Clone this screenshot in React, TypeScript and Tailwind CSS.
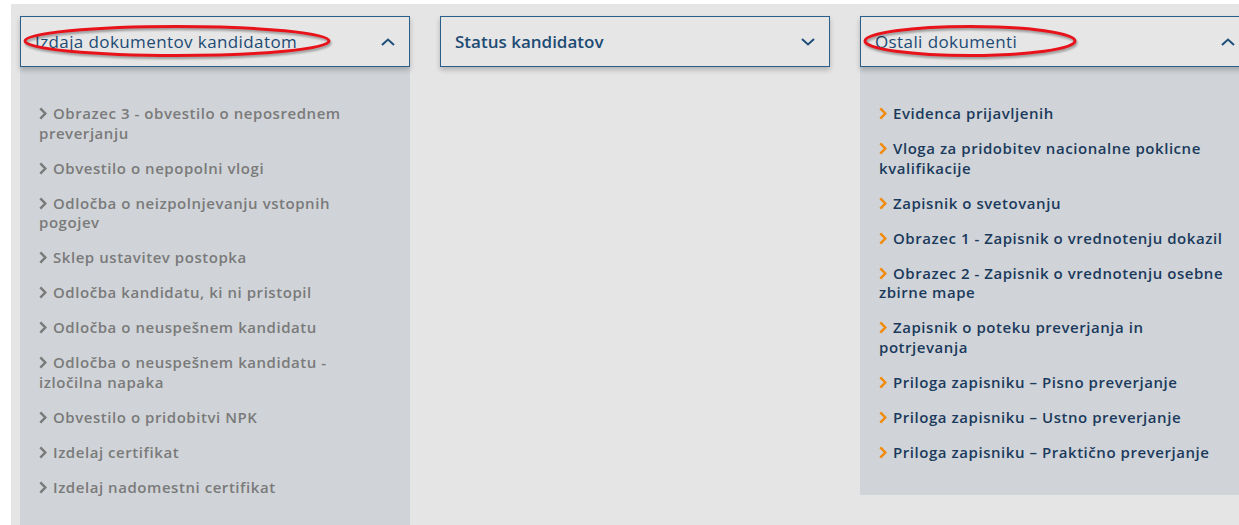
import React from 'react';

const izdaja = [
  'Obrazec 3 - obvestilo o neposrednem preverjanju',
  'Obvestilo o nepopolni vlogi',
  'Odločba o neizpolnjevanju vstopnih pogojev',
  'Sklep ustavitev postopka',
  'Odločba kandidatu, ki ni pristopil',
  'Odločba o neuspešnem kandidatu',
  'Odločba o neuspešnem kandidatu - izločilna napaka',
  'Obvestilo o pridobitvi NPK',
  'Izdelaj certifikat',
  'Izdelaj nadomestni certifikat',
];

const ostali = [
  'Evidenca prijavljenih',
  'Vloga za pridobitev nacionalne poklicne kvalifikacije',
  'Zapisnik o svetovanju',
  'Obrazec 1 - Zapisnik o vrednotenju dokazil',
  'Obrazec 2 - Zapisnik o vrednotenju osebne zbirne mape',
  'Zapisnik o poteku preverjanja in potrjevanja',
  'Priloga zapisniku – Pisno preverjanje',
  'Priloga zapisniku – Ustno preverjanje',
  'Priloga zapisniku – Praktično preverjanje',
];

function Caret({ up }: { up: boolean }) {
  return (
    <svg width="14" height="8" viewBox="0 0 14 8" className="shrink-0">
      <path
        d={up ? 'M1 7 L7 1.5 L13 7' : 'M1 1 L7 6.5 L13 1'}
        fill="none"
        stroke="#1f4e78"
        strokeWidth="2"
      />
    </svg>
  );
}

function Arrow({ color }: { color: string }) {
  return (
    <svg width="8" height="13" viewBox="0 0 8 13" className="inline-block align-[-1px] mr-[6px]">
      <path d="M1.3 1.3 L6.3 6.5 L1.3 11.7" fill="none" stroke={color} strokeWidth="2.5" />
    </svg>
  );
}

// red hand-drawn style ring around a header title
function Ring({ w }: { w: number }) {
  return (
    <svg
      width={w}
      height="36"
      viewBox={`0 0 ${w} 36`}
      className="absolute left-[1px] top-[7px] pointer-events-none drop-shadow-[1px_2px_1px_rgba(0,0,0,0.35)]"
    >
      <ellipse cx={w / 2} cy="17" rx={w / 2 - 3} ry="14.5" fill="none" stroke="#e8121a" strokeWidth="3" />
    </svg>
  );
}

function Panel({
  title,
  open,
  ring,
  items,
  active,
}: {
  title: string;
  open: boolean;
  ring?: number;
  items?: string[];
  active?: boolean;
}) {
  return (
    <div className="w-[390px] shrink-0 flex flex-col">
      <div className="relative z-10 h-[51px] bg-[#e6e6e6] border border-[#2b5e8a] shadow-[0_3px_5px_rgba(0,0,0,0.22)] flex items-center justify-between pl-[14px] pr-[14px]">
        <span
          className={`text-[17px] text-[#1d4b74] ${ring ? 'font-medium tracking-[0.4px]' : 'font-semibold'}`}
        >
          {title}
        </span>
        <Caret up={open} />
        {ring ? <Ring w={ring} /> : null}
      </div>
      {open && items ? (
        <ul className="bg-[#d0d4d8] pt-[37px] pb-[33px] pl-[19px] pr-[19px] flex flex-col gap-[15.5px]">
          {items.map((t) => (
            <li
              key={t}
              className={`text-[15px] leading-[19.5px] font-semibold tracking-[0.55px] ${active ? 'text-[#1b3a5c]' : 'text-[#7a7a7a]'}`}
            >
              <Arrow color={active ? '#f28a0a' : '#7a7a7a'} />
              {t}
            </li>
          ))}
        </ul>
      ) : null}
    </div>
  );
}

export default function App() {
  return (
    <div
      className="w-[1239px] h-[525px] overflow-hidden bg-white pl-[11px] pt-[4px]"
      style={{ fontFamily: '"Open Sans", "Noto Sans", Arial, sans-serif' }}
    >
      <div className="h-full bg-[#e5e5e5] pl-[9px] pt-[12px] flex items-start gap-[30px]">
        <Panel title="Izdaja dokumentov kandidatom" open ring={310} items={izdaja} />
        <Panel title="Status kandidatov" open={false} />
        <Panel title="Ostali dokumenti" open ring={216} items={ostali} active />
      </div>
    </div>
  );
}
